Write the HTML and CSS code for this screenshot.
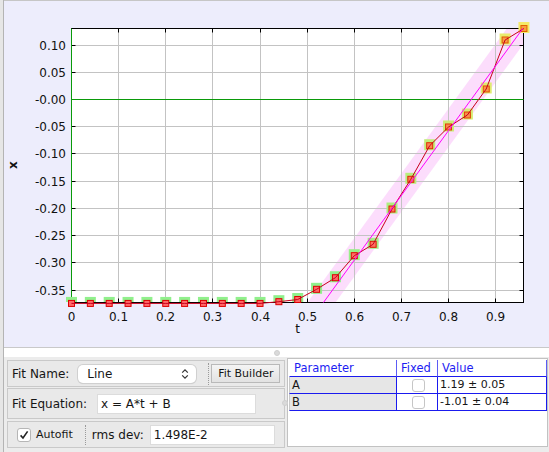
FILE: index.html
```html
<!DOCTYPE html>
<html lang="en">
<head>
    <meta charset="UTF-8">
    <title>Data Tool</title>
    <link rel="stylesheet" href="styles.css">
</head>
<body>
    <div id="window">
        <div id="plot-panel">
            <svg id="chart" width="545" height="346" viewBox="4 1 545 346"></svg>
        </div>
        <div class="split-h"><span class="grip"></span></div>

        <div class="bottom">
            <div class="fit-panel">
                <div class="row row-name">
                    <span class="label">Fit Name:</span>
                    <div class="select">
                        <span>Line</span>
                        <svg class="updown" width="8" height="12" viewBox="0 0 8 12">
                            <path d="M1.2 4.6 L4 1.8 L6.8 4.6 M1.2 7.4 L4 10.2 L6.8 7.4" fill="none" stroke="#333" stroke-width="1.2"/>
                        </svg>
                    </div>
                    <span class="sep"></span>
                    <button class="btn">Fit Builder</button>
                </div>
                <div class="row row-eq">
                    <span class="label">Fit Equation:</span>
                    <div class="field eq-field">x = A*t + B</div>
                </div>
                <div class="row row-auto">
                    <span class="check">
                        <svg width="14" height="14" viewBox="0 0 14 14">
                            <path d="M3.6 7.4 L6 10 L10.6 3.4" fill="none" stroke="#222" stroke-width="1.6"/>
                        </svg>
                    </span>
                    <span class="small">Autofit</span>
                    <span class="sep sep-auto"></span>
                    <span class="label">rms dev:</span>
                    <div class="field rms-field">1.498E-2</div>
                </div>
            </div>

            <div class="split-v"><span class="grip"></span></div>

            <div class="table-panel">
                <div class="param-table">
                    <div class="th">Parameter</div>
                    <div class="th">Fixed</div>
                    <div class="th">Value</div>

                    <div class="td name">A</div>
                    <div class="td fixed"><span class="box"></span></div>
                    <div class="td value">1.19 ± 0.05</div>

                    <div class="td name">B</div>
                    <div class="td fixed"><span class="box"></span></div>
                    <div class="td value">-1.01 ± 0.04</div>
                </div>
            </div>
        </div>
    </div>

    <script>
        var NS = 'http://www.w3.org/2000/svg';
        var svg = document.getElementById('chart');

        // plot frame, in page pixels
        var L = 71.5, R = 523.5, T = 28.5, B = 302.5;

        function px(t) { return 71.5 + 471.3 * t; }
        function py(v) { return 99 - 544.4 * v; }
        function gx(t) { return Math.round(71 + 471.3 * t) + 0.5; }
        function gy(v) { return Math.round(99 - 544.4 * v) + 0.5; }

        function el(name, attrs, parent) {
            var e = document.createElementNS(NS, name);
            for (var k in attrs) e.setAttribute(k, attrs[k]);
            (parent || svg).appendChild(e);
            return e;
        }

        // measured x(t), sampled every 0.04
        var data = [-0.3755, -0.3755, -0.3755, -0.3755, -0.3755, -0.3755, -0.3755, -0.3755,
            -0.3755, -0.3755, -0.3755, -0.3723, -0.3683, -0.3496, -0.3283, -0.2878, -0.2669,
            -0.2021, -0.1475, -0.0858, -0.0514, -0.0294, 0.0184, 0.1084, 0.1295];

        // fit result x = A*t + B
        var A = 1.19, Bc = -1.01;

        var defs = el('defs', {});
        var cp = el('clipPath', {id: 'plot-clip'}, defs);
        el('rect', {x: L, y: T, width: R - L, height: B - T}, cp);
        var cp2 = el('clipPath', {id: 'low-clip'}, defs);
        el('rect', {x: 0, y: 0, width: 549, height: 302}, cp2);

        el('rect', {x: L, y: T, width: R - L, height: B - T, fill: '#fff'});

        // error band around the fit
        var band = el('g', {'clip-path': 'url(#plot-clip)'});
        var v0 = -0.45, v1 = 0.2;
        var f0 = px((v0 - Bc) / A), f1 = px((v1 - Bc) / A);
        el('polygon', {
            points: (f0 - 16) + ',' + py(v0) + ' ' + (f1 - 16) + ',' + py(v1) + ' ' +
                (f1 + 12) + ',' + py(v1) + ' ' + (f0 + 12) + ',' + py(v0),
            fill: 'rgba(240,100,240,0.22)'
        }, band);

        // grid
        var grid = el('g', {stroke: '#c3c3c3', 'stroke-width': 1});
        for (var i = 1; i <= 9; i++) {
            el('line', {x1: gx(i / 10), y1: T, x2: gx(i / 10), y2: B}, grid);
        }
        var yTicks = [];
        for (var k = 2; k >= -7; k--) yTicks.push(k * 0.05);
        yTicks.forEach(function (v) {
            if (Math.abs(v) < 1e-9) return;
            el('line', {x1: L, y1: gy(v), x2: R, y2: gy(v)}, grid);
        });

        // frame and ticks
        var axes = el('g', {stroke: '#000', 'stroke-width': 1, fill: 'none'});
        el('rect', {x: L, y: T, width: R - L, height: B - T}, axes);
        for (var i = 1; i <= 9; i++) {
            el('line', {x1: gx(i / 10), y1: T, x2: gx(i / 10), y2: T + 4}, axes);
            el('line', {x1: gx(i / 10), y1: B, x2: gx(i / 10), y2: B - 4}, axes);
        }
        yTicks.forEach(function (v) {
            el('line', {x1: L, y1: gy(v), x2: L + 4, y2: gy(v)}, axes);
            el('line', {x1: R, y1: gy(v), x2: R - 4, y2: gy(v)}, axes);
        });

        // zero lines
        el('line', {x1: L, y1: gy(0), x2: R, y2: gy(0), stroke: '#0a9a0a'});
        el('line', {x1: L, y1: T, x2: L, y2: B, stroke: '#0a9a0a'});

        // tick labels
        var labels = el('g', {'font-family': 'DejaVu Sans, sans-serif', 'font-size': 12, fill: '#111'});
        yTicks.forEach(function (v) {
            var s = Math.abs(v).toFixed(2);
            if (v < 1e-9) s = '-' + s;
            var t = el('text', {x: 66, y: gy(v) + 4.5, 'text-anchor': 'end'}, labels);
            t.textContent = s;
        });
        for (var i = 0; i <= 9; i++) {
            var t = el('text', {x: gx(i / 10), y: 321, 'text-anchor': 'middle'}, labels);
            t.textContent = i == 0 ? '0' : (i / 10).toFixed(1);
        }
        var tt = el('text', {x: 297.5, y: 333, 'text-anchor': 'middle'}, labels);
        tt.textContent = 't';
        var tx = el('text', {x: 17, y: 165, 'text-anchor': 'middle', 'font-weight': 'bold',
            transform: 'rotate(-90 17 165)'}, labels);
        tx.textContent = 'x';

        function mix(a, b, f) {
            var r = a.map(function (c, j) { return Math.round(c + (b[j] - c) * f); });
            return 'rgb(' + r.join(',') + ')';
        }

        // highlight squares behind the points
        var hi = el('g', {'clip-path': 'url(#low-clip)'});
        data.forEach(function (v, i) {
            var f = Math.max(0, (i - 14) / 10);
            var x = px(i * 0.04), y = py(v) - 1;
            el('rect', {x: x - 5.5, y: y - 5.5, width: 11, height: 11,
                fill: mix([144, 240, 140], [244, 234, 106], f)}, hi);
        });

        // data points
        var pts = el('g', {'stroke-width': 1});
        data.forEach(function (v, i) {
            var f = Math.max(0, (i - 14) / 10);
            var x = px(i * 0.04), y = py(v);
            el('rect', {x: x - 3, y: y - 3, width: 6, height: 6,
                fill: mix([255, 104, 104], [247, 160, 64], f),
                stroke: mix([221, 0, 0], [224, 96, 0], f)}, pts);
        });

        // connecting line
        var d = data.map(function (v, i) {
            return (i ? 'L' : 'M') + px(i * 0.04).toFixed(1) + ' ' + py(v).toFixed(1);
        }).join(' ');
        el('path', {d: d, fill: 'none', stroke: '#c8001c', 'stroke-width': 1});

        // fit line
        var fitG = el('g', {'clip-path': 'url(#plot-clip)'});
        el('line', {x1: px((-0.4 - Bc) / A), y1: py(-0.4), x2: px(0.96), y2: py(A * 0.96 + Bc),
            stroke: '#ff00ff', 'stroke-width': 1}, fitG);
    </script>
</body>
</html>
```

FILE: styles.css
```css
*{
    margin: 0;
    padding: 0;
    box-sizing: border-box;
}
body{
    width: 549px;
    height: 452px;
    overflow: hidden;
    background: #e6e6e6;
    font-family: "DejaVu Sans", sans-serif;
    font-size: 12px;
    color: #161616;
}
#window{
    height: 452px;
    margin-left: 3px;
    border-left: 1px solid #b4b4b4;
    display: flex;
    flex-direction: column;
}
#plot-panel{
    height: 347px;
    border-top: 1px solid #c6c6c6;
    background: #ededfc;
}
#plot-panel svg{
    display: block;
}
.split-h{
    height: 10px;
    background: #fff;
    border-top: 1px solid #c9c9c9;
    display: flex;
    justify-content: center;
    align-items: center;
}
.grip{
    width: 6px;
    height: 6px;
    border-radius: 50%;
    background: #dadada;
    border: 1px solid #cfcfcf;
}
.bottom{
    flex: 1;
    display: flex;
    background: #ececec;
}
.fit-panel{
    width: 281px;
    padding: 3px 0 0 3px;
    display: flex;
    flex-direction: column;
}
.row{
    display: flex;
    align-items: center;
    border: 1px solid #c9c9c9;
    background: #e9e9e9;
    padding-left: 4px;
}
.row-name{
    height: 27px;
}
.row-eq{
    height: 31px;
    margin-top: 1px;
}
.row-auto{
    height: 27px;
    margin-top: 2px;
}
.label{
    white-space: nowrap;
}
.select{
    width: 118px;
    height: 18px;
    margin-left: 9px;
    padding: 0 7px 0 9px;
    border-radius: 5px;
    background: #fff;
    box-shadow: 0 0 0 1px #d0d0d0, 0 1px 1px rgba(0,0,0,0.14);
    display: flex;
    align-items: center;
    justify-content: space-between;
}
.sep{
    width: 0;
    height: 22px;
    margin-left: 12px;
    border-left: 1px dotted #9a9a9a;
}
.btn{
    width: 69px;
    height: 19px;
    margin-left: 2px;
    font-family: "DejaVu Sans", sans-serif;
    font-size: 11px;
    color: #161616;
    border: 1px solid #b9b9b9;
    background: linear-gradient(#f4f4f4, #e2e2e2);
}
.field{
    height: 20px;
    margin-left: 10px;
    padding-left: 3px;
    background: #fff;
    border: 1px solid #dcdcdc;
    line-height: 18px;
    white-space: nowrap;
}
.eq-field{
    width: 159px;
}
.rms-field{
    width: 125px;
    margin-left: 6px;
}
.check{
    width: 14px;
    height: 14px;
    margin-left: 5px;
    border: 1px solid #b6b6b6;
    border-radius: 3px;
    background: #fff;
    display: flex;
}
.check svg{
    margin: -1px;
}
.small{
    font-size: 11px;
    margin-left: 5px;
}
.sep-auto{
    height: 20px;
    margin-left: 12px;
    margin-right: 6px;
}
.split-v{
    width: 2px;
    position: relative;
}
.split-v .grip{
    position: absolute;
    left: -3px;
    top: 43px;
}
.table-panel{
    flex: 1;
    margin: 1px 1px 5px 0;
    border: 1px solid #c2c2c2;
    background: #fff;
    padding: 1px 0 0 1px;
}
.param-table{
    display: grid;
    grid-template-columns: 108px 41px 109px;
    grid-auto-rows: 17px;
    font-size: 11.5px;
}
.th{
    color: #1d1df2;
    padding-left: 4px;
    line-height: 17px;
    border-right: 1px solid #5c5cf5;
    border-bottom: 1px solid #1a1aee;
    background: #fff;
}
.th:nth-child(1){
    border-left: 1px solid #fff;
}
.td{
    line-height: 16px;
    border-right: 1px solid #1a1aee;
    border-bottom: 1px solid #1a1aee;
    padding-left: 2px;
    white-space: nowrap;
}
.td.name{
    background: #e6e6e6;
    border-left: 1px solid #c8c8c8;
}
.td.value{
    font-size: 11px;
}
.td.fixed{
    display: flex;
    justify-content: center;
    align-items: center;
}
.box{
    width: 13px;
    height: 13px;
    border: 1px solid #c6c6c6;
    border-radius: 3px;
    background: #fff;
}
```
